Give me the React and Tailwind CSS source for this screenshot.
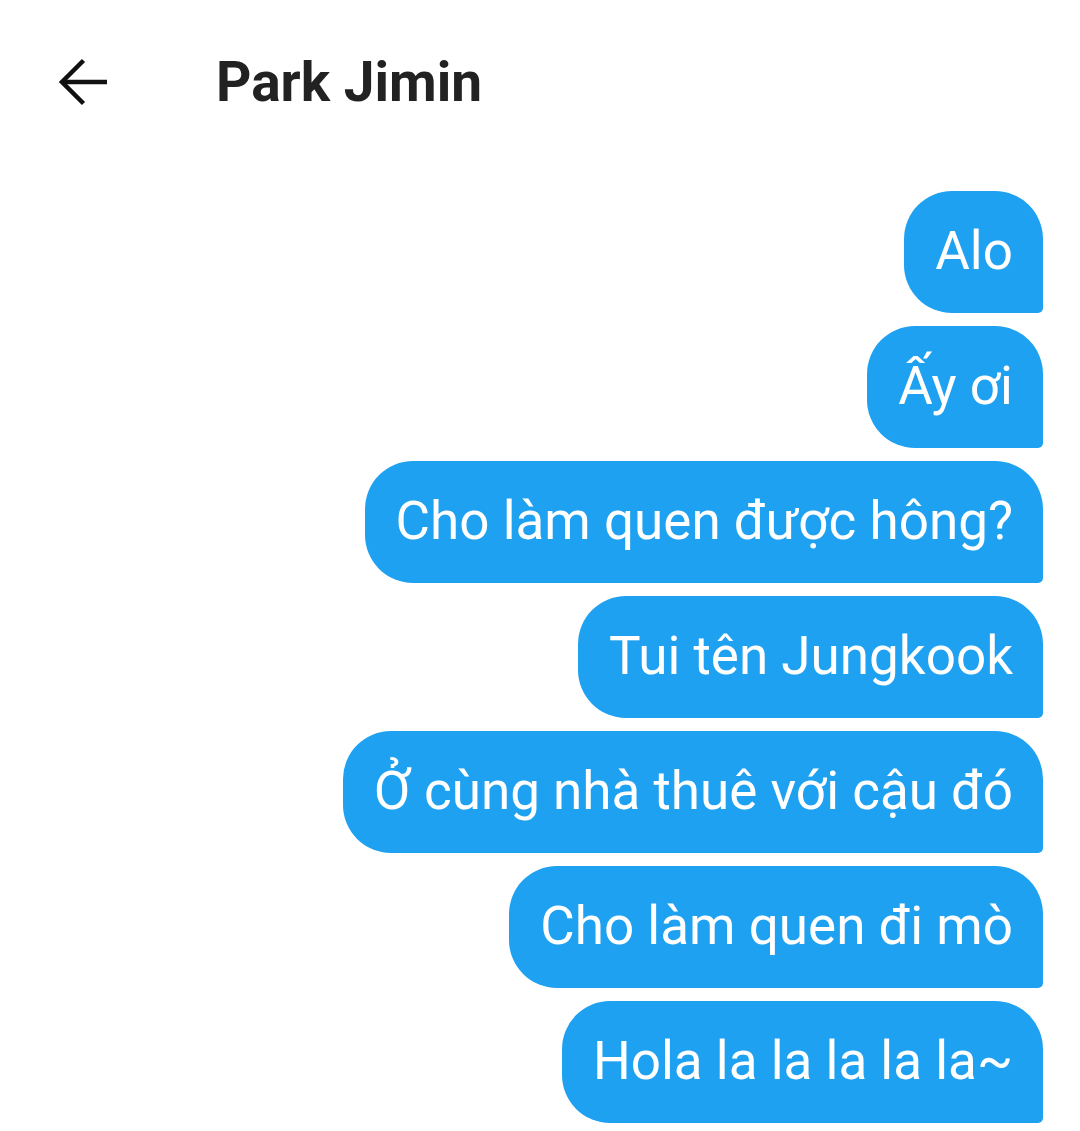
import React from 'react';

const messages = [
  'Alo',
  'Ấy ơi',
  'Cho làm quen được hông?',
  'Tui tên Jungkook',
  'Ở cùng nhà thuê với cậu đó',
  'Cho làm quen đi mò',
  'Hola la la la la la~',
];

const BackArrow = () => (
  <svg width="50" height="50" viewBox="0 0 50 50" fill="none" stroke="#111" strokeWidth="4.5">
    <path d="M49 25H4" />
    <path d="M25.5 3.5L4 25l21.5 21.5" />
  </svg>
);

const App = () => {
  return (
    <div className="min-h-[1131px] w-[1080px] bg-white font-['Roboto','Liberation_Sans',sans-serif]">
      <header className="flex items-center h-[164px]">
        <button className="ml-[58px] flex items-center">
          <BackArrow />
        </button>
        <h1 className="ml-[108px] text-[55px] font-bold text-[#222] leading-none">Park Jimin</h1>
      </header>

      <div className="flex flex-col items-end gap-[13px] pt-[27px] pr-[37px]">
        {messages.map((m, i) => (
          <div
            key={i}
            className="h-[122px] flex items-center pl-[31px] pr-[30px] bg-[#1FA1F1] text-white text-[53px] rounded-[48px] rounded-br-[5px] whitespace-nowrap"
          >
            {m}
          </div>
        ))}
      </div>
    </div>
  );
};

export default App;
